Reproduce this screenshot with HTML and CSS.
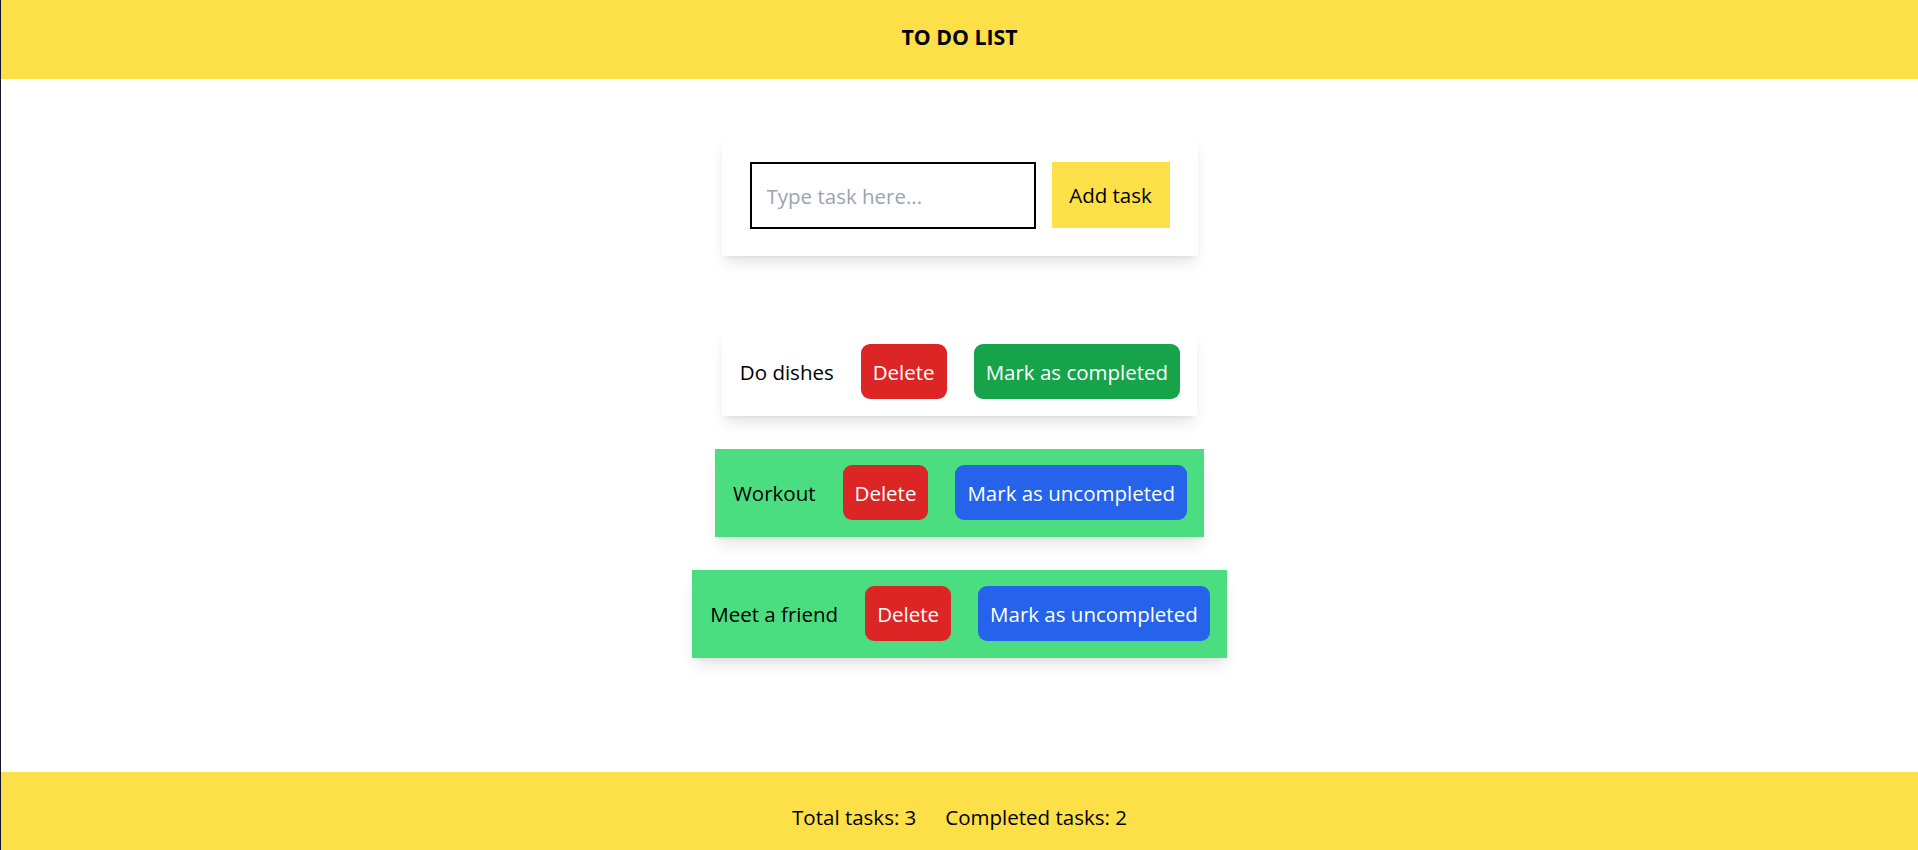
FILE: index.html
```html
<!DOCTYPE html>
<html lang="en">
<head>
<meta charset="utf-8">
<title>To Do List</title>
<link rel="stylesheet" href="styles.css">
</head>
<body>
<div class="app">
  <header class="header">
    <h1 class="title">TO DO LIST</h1>
  </header>
  <main class="main">
    <form class="add-card">
      <input class="task-input" type="text" placeholder="Type task here...">
      <button class="add-btn" type="button">Add task</button>
    </form>
    <ul class="task-list">
      <li class="task">
        <span class="task-name">Do dishes</span>
        <button class="btn btn-delete" type="button">Delete</button>
        <button class="btn btn-complete" type="button">Mark as completed</button>
      </li>
      <li class="task task-done">
        <span class="task-name">Workout</span>
        <button class="btn btn-delete" type="button">Delete</button>
        <button class="btn btn-uncomplete" type="button">Mark as uncompleted</button>
      </li>
      <li class="task task-done">
        <span class="task-name">Meet a friend</span>
        <button class="btn btn-delete" type="button">Delete</button>
        <button class="btn btn-uncomplete" type="button">Mark as uncompleted</button>
      </li>
    </ul>
  </main>
  <footer class="footer">
    <span>Total tasks: 3</span>
    <span>Completed tasks: 2</span>
  </footer>
</div>
</body>
</html>
```

FILE: styles.css
```css
* {
  box-sizing: border-box;
}

html, body {
  margin: 0;
  padding: 0;
}

body {
  font-family: "Open Sans", "Noto Sans", "Liberation Sans", sans-serif;
  font-size: 20.5px;
  color: #000;
  background: #fff;
  border-left: 1px solid #14142b;
}

.app {
  min-height: 100vh;
  display: flex;
  flex-direction: column;
}

.header {
  height: 79px;
  background: #fde047;
  display: flex;
  align-items: center;
  justify-content: center;
  padding-bottom: 6px;
}

.title {
  margin: 0;
  font-size: 21.3px;
  font-weight: 700;
}

.main {
  flex: 1;
  display: flex;
  flex-direction: column;
  align-items: center;
  padding-top: 54px;
}

.add-card {
  display: flex;
  gap: 16px;
  margin: 0;
  padding: 29px 28px 27px;
  background: #fff;
  box-shadow: 0 10px 15px -3px rgba(0, 0, 0, 0.1), 0 4px 6px -4px rgba(0, 0, 0, 0.1);
}

.task-input {
  width: 286px;
  height: 67px;
  border: 2px solid #000;
  border-radius: 0;
  padding: 0 15px;
  font-family: inherit;
  font-size: 20.5px;
  color: #000;
  outline: none;
}

.task-input::placeholder {
  color: #9ca3af;
}

.add-btn {
  width: 118px;
  height: 66px;
  border: 0;
  background: #fde047;
  font-family: inherit;
  font-size: 20.5px;
  color: #000;
  padding: 0;
}

.task-list {
  list-style: none;
  margin: 72px 0 0;
  padding: 0;
  display: flex;
  flex-direction: column;
  align-items: center;
  gap: 33px;
}

.task {
  display: flex;
  align-items: center;
  gap: 27px;
  padding: 16px 17px 17px 18px;
  background: #fff;
  box-shadow: 0 10px 15px -3px rgba(0, 0, 0, 0.1), 0 4px 6px -4px rgba(0, 0, 0, 0.1);
}

.task-done {
  background: #4ade80;
}

.task-name {
  color: #000;
}

.btn {
  height: 55px;
  border: 0;
  border-radius: 9px;
  padding: 0 12px;
  font-family: inherit;
  font-size: 20.5px;
  color: #fff;
}

.btn-delete {
  background: #dc2626;
}

.btn-complete {
  background: #16a34a;
}

.btn-uncomplete {
  background: #2563eb;
}

.footer {
  height: 78px;
  background: #fde047;
  display: flex;
  align-items: center;
  justify-content: center;
  gap: 29px;
  padding-top: 11px;
}
```
